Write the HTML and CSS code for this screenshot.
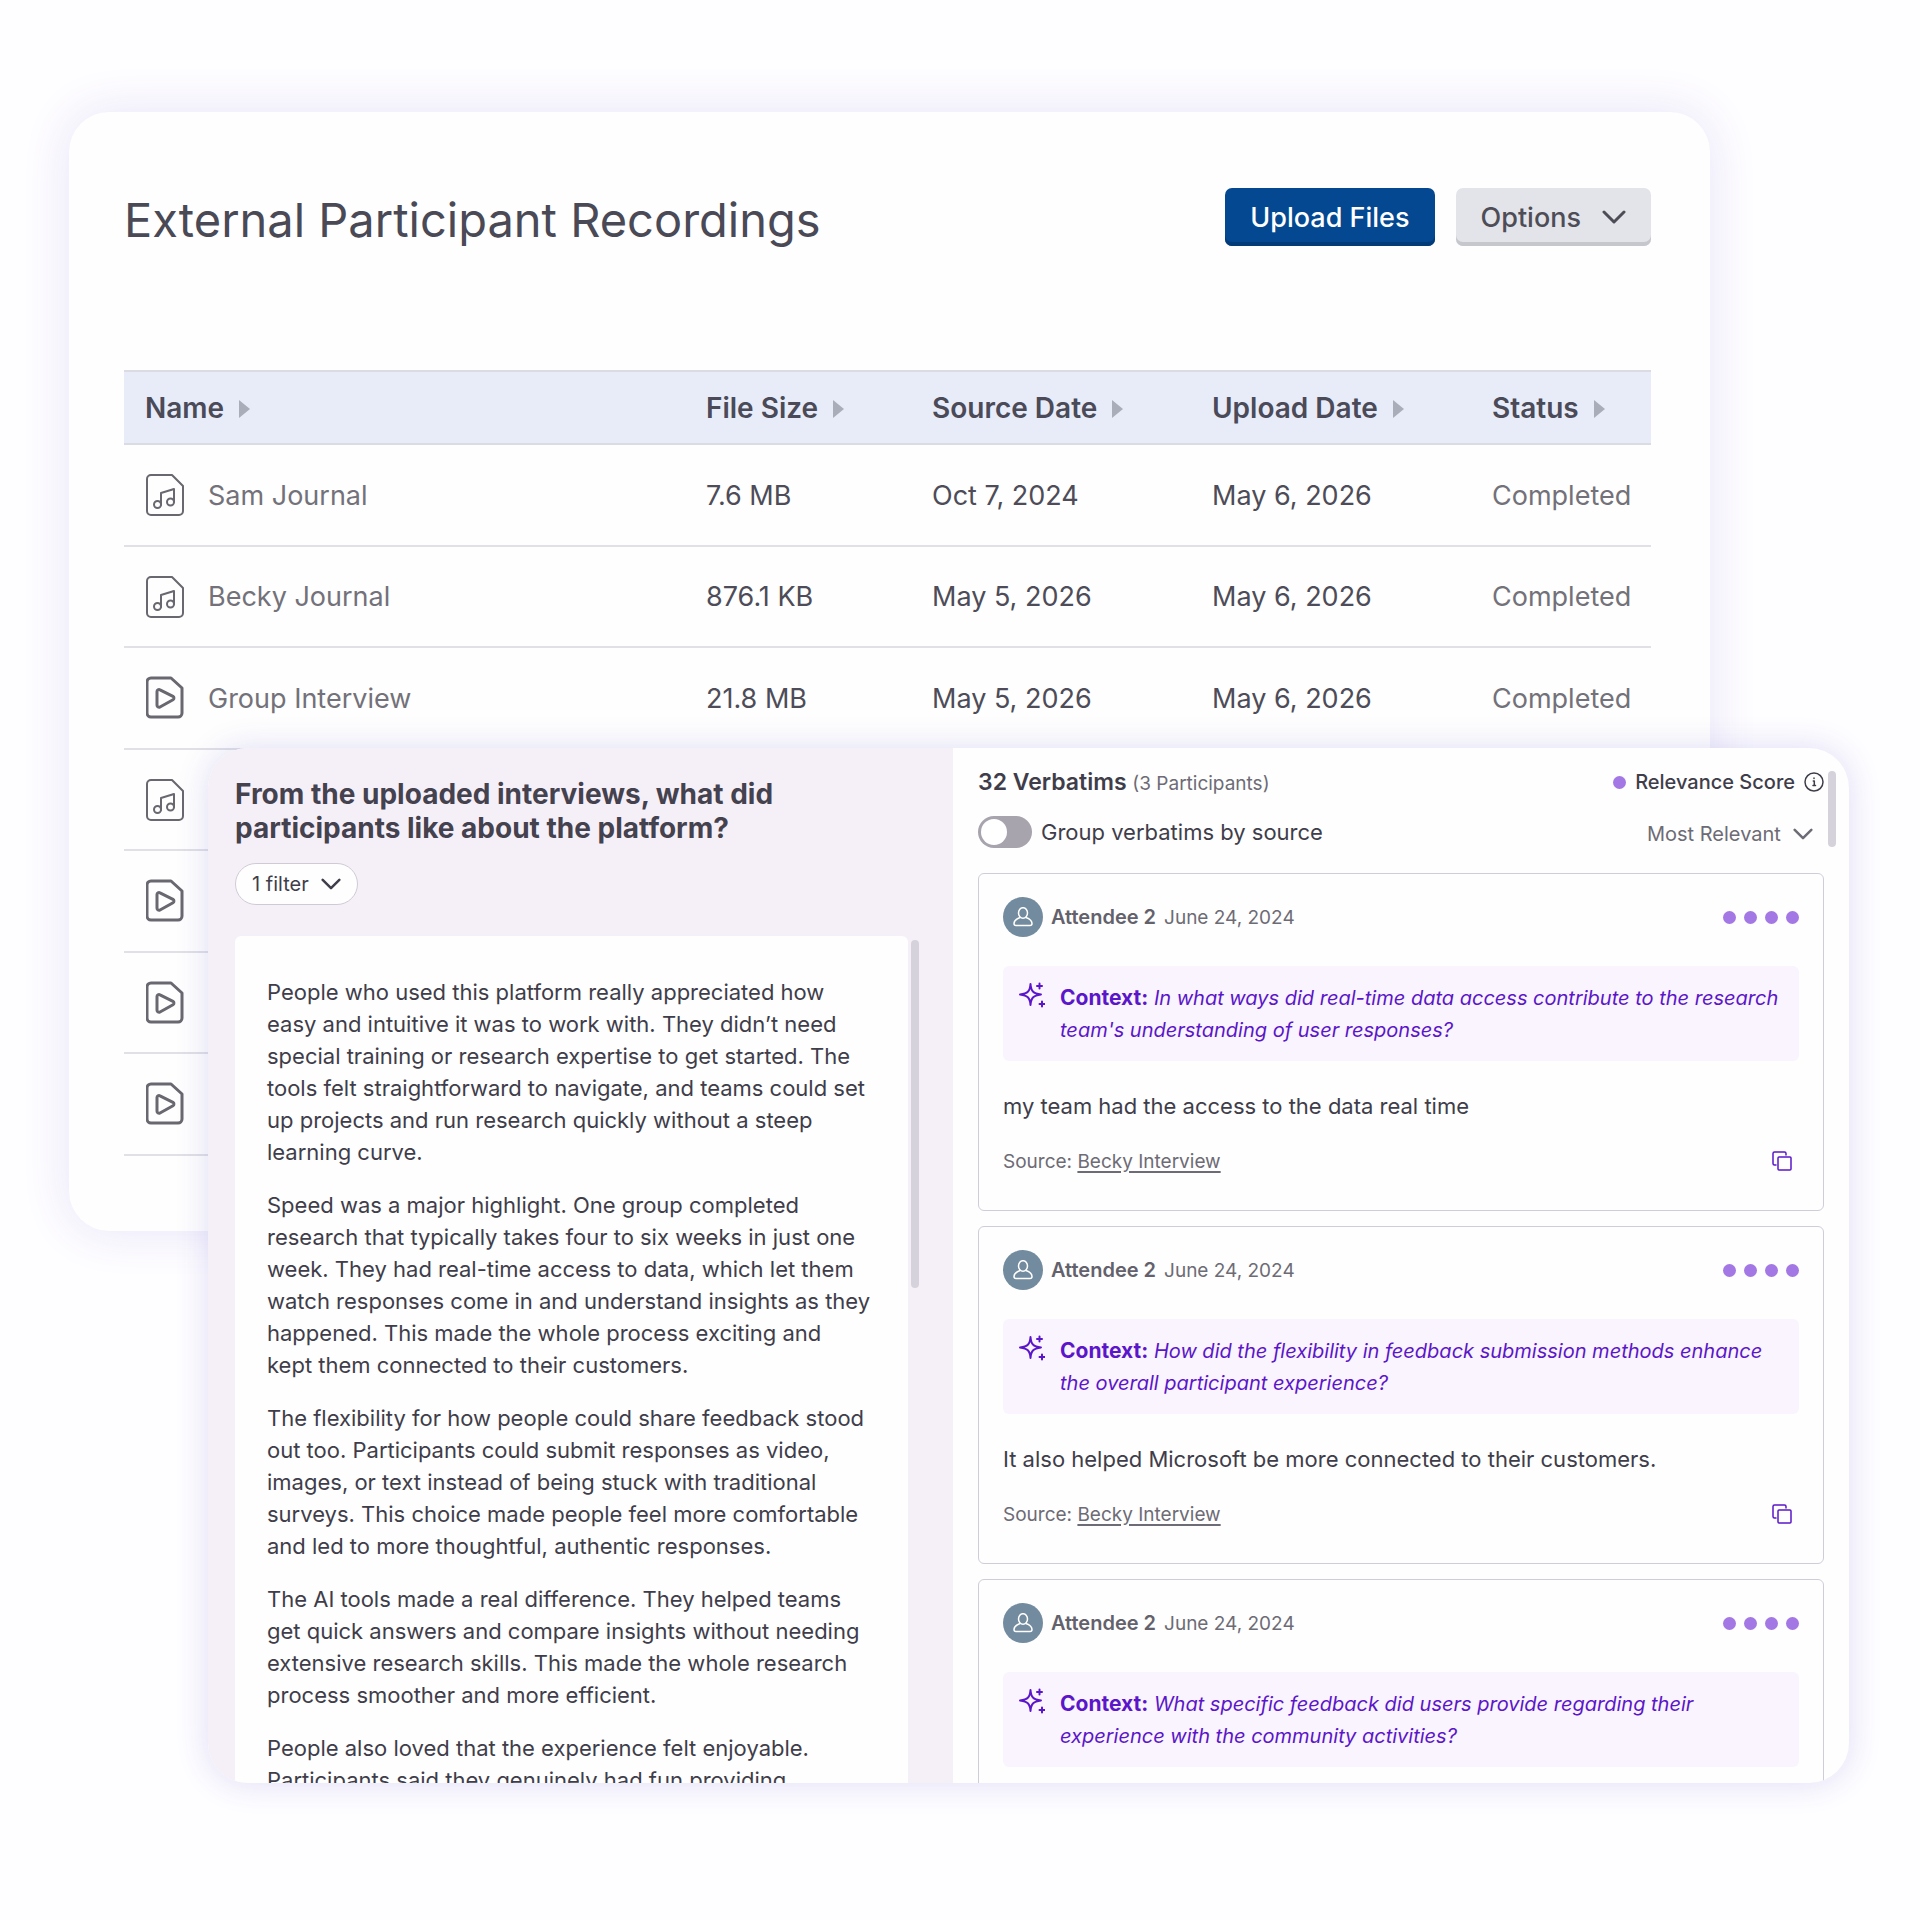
FILE: index.html
```html
<!DOCTYPE html>
<html lang="en">
<head>
    <meta charset="UTF-8">
    <meta name="viewport" content="width=device-width, initial-scale=1.0">
    <title>External Participant Recordings</title>
    <link rel="stylesheet" href="styles.css">
</head>
<body>

<!-- Shared icons -->
<svg class="sprite" aria-hidden="true">
    <symbol id="icon-audio" viewBox="0 0 40 44">
        <path d="M5 2H26L37 13V38a4 4 0 0 1-4 4H5a4 4 0 0 1-4-4V6a4 4 0 0 1 4-4z"/>
        <path d="M15 32V20L28 16V29"/>
        <circle cx="11.500" cy="31.500" r="3.500"/>
        <circle cx="24.500" cy="29" r="3.500"/>
    </symbol>
    <symbol id="icon-video" viewBox="0 0 40 44">
        <path d="M5 2H25L36 12V37a4 4 0 0 1-4 4H5a4 4 0 0 1-4-4V6a4 4 0 0 1 4-4z"/>
        <path d="M11 15.500a2 2 0 0 1 3-1.700L27 20.300a2 2 0 0 1 0 3.400L14 31a2 2 0 0 1-3-1.700z"/>
    </symbol>
    <symbol id="icon-chevron" viewBox="0 0 24 14">
        <path d="M2 2L12 12L22 2"/>
    </symbol>
    <symbol id="icon-info" viewBox="0 0 20 20">
        <circle cx="10" cy="10" r="9"/>
        <path d="M9.300 9H10.300V13.500M9 13.500H11.500M10 6V6.500"/>
    </symbol>
    <symbol id="icon-person" viewBox="0 0 20 20">
        <ellipse cx="10" cy="6" rx="4.500" ry="5.300"/>
        <path d="M7 10.500C3 12 1 14 1 16.500Q1 18.500 3 18.500H17Q19 18.500 19 16.500C19 14 17 12 13 10.500"/>
    </symbol>
    <symbol id="icon-sparkle" viewBox="0 0 26 26">
        <path d="M11.500 2C12 9 14 11.500 22 12.500C14 13.500 12 16 11.500 23C11 16 9 13.500 1 12.500C9 11.500 11 9 11.500 2z"/>
        <path d="M20.500 1.500V6.500M18 4H23M23 19.500V24.500M20.500 22H25.500"/>
    </symbol>
    <symbol id="icon-copy" viewBox="0 0 20 20">
        <path d="M4 14H2.500Q1 14 1 12.500V2.500Q1 1 2.500 1H12.500Q14 1 14 2.500V4"/>
        <rect x="6" y="6" width="13" height="13" rx="1"/>
    </symbol>
</svg>

<main class="page">
    <section class="card recordings">
        <header class="recordings-header">
            <h1>External Participant Recordings</h1>
            <div class="actions">
                <button type="button" class="btn btn-primary">Upload Files</button>
                <button type="button" class="btn btn-secondary">Options <svg class="chevron"><use href="#icon-chevron"/></svg></button>
            </div>
        </header>

        <table class="files">
            <colgroup>
                <col class="col-name">
                <col class="col-size">
                <col class="col-date">
                <col class="col-date">
                <col class="col-status">
            </colgroup>
            <thead>
                <tr>
                    <th><span class="sort">Name</span></th>
                    <th><span class="sort">File Size</span></th>
                    <th><span class="sort">Source Date</span></th>
                    <th><span class="sort">Upload Date</span></th>
                    <th><span class="sort">Status</span></th>
                </tr>
            </thead>
            <tbody>
                <tr>
                    <td><div class="file"><svg class="file-icon"><use href="#icon-audio"/></svg>Sam Journal</div></td>
                    <td>7.6 MB</td>
                    <td>Oct 7, 2024</td>
                    <td>May 6, 2026</td>
                    <td class="status">Completed</td>
                </tr>
                <tr>
                    <td><div class="file"><svg class="file-icon"><use href="#icon-audio"/></svg>Becky Journal</div></td>
                    <td>876.1 KB</td>
                    <td>May 5, 2026</td>
                    <td>May 6, 2026</td>
                    <td class="status">Completed</td>
                </tr>
                <tr>
                    <td><div class="file"><svg class="file-icon file-video"><use href="#icon-video"/></svg>Group Interview</div></td>
                    <td>21.8 MB</td>
                    <td>May 5, 2026</td>
                    <td>May 6, 2026</td>
                    <td class="status">Completed</td>
                </tr>
                <tr>
                    <td colspan="5"><div class="file"><svg class="file-icon"><use href="#icon-audio"/></svg></div></td>
                </tr>
                <tr>
                    <td colspan="5"><div class="file"><svg class="file-icon file-video"><use href="#icon-video"/></svg></div></td>
                </tr>
                <tr>
                    <td colspan="5"><div class="file"><svg class="file-icon file-video"><use href="#icon-video"/></svg></div></td>
                </tr>
                <tr>
                    <td colspan="5"><div class="file"><svg class="file-icon file-video"><use href="#icon-video"/></svg></div></td>
                </tr>
            </tbody>
        </table>
    </section>

    <section class="card insights">
        <div class="answer">
            <h2>From the uploaded interviews, what did participants like about the platform?</h2>
            <button type="button" class="filter">1 filter <svg class="chevron"><use href="#icon-chevron"/></svg></button>

            <div class="answer-body">
                <div class="answer-text">
                    <p>People who used this platform really appreciated how easy and intuitive it was to work with. They didn’t need special training or research expertise to get started. The tools felt straightforward to navigate, and teams could set up projects and run research quickly without a steep learning curve.</p>
                    <p>Speed was a major highlight. One group completed research that typically takes four to six weeks in just one week. They had real-time access to data, which let them watch responses come in and understand insights as they happened. This made the whole process exciting and kept&nbsp;them connected to their customers.</p>
                    <p>The flexibility for how people could share feedback stood out too. Participants could submit responses as video, images, or text instead of being stuck with traditional surveys. This choice made people feel more comfortable and led to more thoughtful, authentic responses.</p>
                    <p>The AI tools made a real difference. They helped teams get quick answers and compare insights without needing extensive research skills. This made the whole research process smoother and more efficient.</p>
                    <p>People also loved that the experience felt enjoyable. Participants said they genuinely had fun providing</p>
                </div>
                <div class="scroll-thumb"></div>
            </div>
        </div>

        <div class="verbatims">
            <div class="verbatims-bar">
                <h3>32 Verbatims <small>(3 Participants)</small></h3>
                <div class="score-label"><span class="dot"></span>Relevance Score <svg class="info"><use href="#icon-info"/></svg></div>
            </div>
            <div class="verbatims-bar controls">
                <div class="group-toggle">
                    <input type="checkbox" id="group" class="switch">
                    <label for="group">Group verbatims by source</label>
                </div>
                <div class="sort-by">
                    <select aria-label="Sort verbatims">
                        <option>Most Relevant</option>
                    </select>
                    <svg class="chevron"><use href="#icon-chevron"/></svg>
                </div>
            </div>

            <article class="verbatim">
                <div class="verbatim-head">
                    <span class="avatar"><svg><use href="#icon-person"/></svg></span>
                    <strong>Attendee 2</strong>
                    <span>June 24, 2024</span>
                    <div class="dots"><span class="dot"></span><span class="dot"></span><span class="dot"></span><span class="dot"></span></div>
                </div>
                <div class="context">
                    <svg class="sparkle"><use href="#icon-sparkle"/></svg>
                    <p><b>Context:</b> <em>In what ways did real-time data access contribute to the research team's understanding of user responses?</em></p>
                </div>
                <p class="quote">my team had the access to the data real time</p>
                <div class="verbatim-foot">
                    <span>Source: <a href="#">Becky Interview</a></span>
                    <button type="button" class="copy" aria-label="Copy"><svg><use href="#icon-copy"/></svg></button>
                </div>
            </article>

            <article class="verbatim">
                <div class="verbatim-head">
                    <span class="avatar"><svg><use href="#icon-person"/></svg></span>
                    <strong>Attendee 2</strong>
                    <span>June 24, 2024</span>
                    <div class="dots"><span class="dot"></span><span class="dot"></span><span class="dot"></span><span class="dot"></span></div>
                </div>
                <div class="context">
                    <svg class="sparkle"><use href="#icon-sparkle"/></svg>
                    <p><b>Context:</b> <em>How did the flexibility in feedback submission methods enhance the overall participant experience?</em></p>
                </div>
                <p class="quote">It also helped Microsoft be more connected to their customers.</p>
                <div class="verbatim-foot">
                    <span>Source: <a href="#">Becky Interview</a></span>
                    <button type="button" class="copy" aria-label="Copy"><svg><use href="#icon-copy"/></svg></button>
                </div>
            </article>

            <article class="verbatim">
                <div class="verbatim-head">
                    <span class="avatar"><svg><use href="#icon-person"/></svg></span>
                    <strong>Attendee 2</strong>
                    <span>June 24, 2024</span>
                    <div class="dots"><span class="dot"></span><span class="dot"></span><span class="dot"></span><span class="dot"></span></div>
                </div>
                <div class="context">
                    <svg class="sparkle"><use href="#icon-sparkle"/></svg>
                    <p><b>Context:</b> <em>What specific feedback did users provide regarding their experience with the community activities?</em></p>
                </div>
            </article>

            <div class="scroll-thumb"></div>
        </div>
    </section>
</main>

</body>
</html>
```
FILE: styles.css
```css
* {
    box-sizing: border-box;
}

body {
    margin: 0;
    background-color: #fefdff;
    color: #3f3d4a;
    font-family: Inter, "Liberation Sans", sans-serif;
    font-size: 20px;
}

h1, h2, h3, p {
    margin: 0;
}

button, select {
    font-family: inherit;
    color: inherit;
}

svg {
    display: block;
    flex: none;
    fill: none;
    stroke: currentColor;
    stroke-width: 2;
    stroke-linecap: round;
    stroke-linejoin: round;
}

.sprite {
    position: absolute;
    width: 0;
    height: 0;
}

.page {
    padding: 112px 71px 137px 69px;
}

.card {
    background-color: #fefefe;
    border-radius: 40px;
}

/* Recordings */
.recordings {
    margin-right: 139px;
    padding: 76px 59px 75px 55px;
    box-shadow: 0 0 48px rgba(90, 80, 200, 0.14);
}

.recordings-header {
    display: flex;
    justify-content: space-between;
    align-items: flex-start;
    height: 182px;
}

h1 {
    font-size: 47px;
    font-weight: 400;
    line-height: 64px;
    color: #4a4956;
}

.actions {
    display: flex;
    gap: 21px;
}

.btn {
    display: flex;
    align-items: center;
    justify-content: center;
    gap: 21px;
    height: 58px;
    padding: 0 25px;
    border: none;
    border-radius: 7px;
    font-size: 27px;
    font-weight: 500;
    cursor: pointer;
}

.btn-primary {
    background-color: #034891;
    color: white;
    box-shadow: inset 0 -4px #033a78;
}

.btn-secondary {
    background-color: #e3e4e9;
    color: #4e4d57;
    box-shadow: inset 0 -4px #c6c7cd;
}

.chevron {
    width: 24px;
    height: 14px;
}

.btn .chevron {
    stroke-width: 3;
}

.files {
    width: 100%;
    border-collapse: collapse;
    table-layout: fixed;
    font-size: 27px;
}

.col-size {
    width: 226px;
}

.col-date {
    width: 280px;
}

.col-status {
    width: 180px;
}

.files th {
    height: 73px;
    padding: 0 0 0 21px;
    background-color: #e8ecf9;
    border-top: 2px solid #dadbe3;
    border-bottom: 2px solid #dadbe3;
    text-align: left;
    font-size: 28px;
    font-weight: 600;
    color: #4a4a58;
}

.files td {
    height: 101px;
    padding: 0 0 0 21px;
    border-bottom: 2px solid #e0e0e6;
    color: #4d4c58;
}

.files tbody tr:nth-child(odd) td {
    height: 102px;
}

.files .status, .file {
    color: #737179;
}

.sort::after {
    content: "";
    display: inline-block;
    margin-left: 15px;
    border-left: 11px solid #a9adba;
    border-top: 9px solid transparent;
    border-bottom: 9px solid transparent;
}

.file {
    display: flex;
    align-items: center;
    gap: 22px;
    padding-left: 1px;
}

.file-icon {
    width: 40px;
    height: 44px;
    stroke: #69676f;
}

.file-video {
    stroke-width: 3;
}

/* Insights */
.insights {
    position: relative;
    display: flex;
    height: 1035px;
    margin: -483px 0 0 139px;
    overflow: hidden;
    box-shadow: 0 0 32px rgba(80, 70, 200, 0.18);
}

.answer {
    width: 745px;
    flex: none;
    padding: 29px 34px 0 27px;
    background-color: #f5f0f7;
}

h2 {
    font-size: 28px;
    font-weight: 700;
    line-height: 34px;
    color: #45424f;
}

.filter {
    display: flex;
    align-items: center;
    gap: 12px;
    height: 42px;
    margin: 18px 0 31px;
    padding: 0 16px;
    border: 1px solid #d0cad6;
    border-radius: 21px;
    background-color: #fefefe;
    font-size: 20px;
    cursor: pointer;
}

.filter .chevron, .sort-by .chevron {
    width: 20px;
    height: 12px;
    stroke-width: 3;
}

.answer-body {
    display: flex;
    gap: 3px;
}

.answer-text {
    flex: 1;
    padding: 40px 34px 0 32px;
    border-radius: 6px;
    background-color: #fefefe;
    line-height: 32px;
    font-size: 22px;
}

.answer-text p {
    margin-bottom: 21px;
}

.scroll-thumb {
    width: 8px;
    height: 348px;
    margin-top: 4px;
    border-radius: 4px;
    background-color: #d6d2db;
}

.verbatims {
    position: relative;
    flex: 1;
    padding: 20px 25px 0;
}

.verbatims .scroll-thumb {
    position: absolute;
    top: 23px;
    right: 13px;
    height: 76px;
    margin: 0;
}

.verbatims-bar {
    display: flex;
    justify-content: space-between;
    align-items: center;
    height: 28px;
}

.controls {
    height: 32px;
    margin: 20px 0 25px;
}

h3 {
    font-size: 23px;
    font-weight: 600;
}

h3 small {
    font-size: 19px;
    font-weight: 400;
    color: #6d6b75;
}

.score-label {
    display: flex;
    align-items: center;
    gap: 9px;
    font-weight: 500;
}

.info {
    width: 20px;
    height: 20px;
    stroke-width: 1.5;
}

.dot {
    width: 13px;
    height: 13px;
    border-radius: 50%;
    background-color: #a478e4;
}

.group-toggle {
    display: flex;
    align-items: center;
    gap: 9px;
    font-size: 22px;
}

.switch {
    appearance: none;
    width: 54px;
    height: 32px;
    margin: 0;
    border-radius: 16px;
    background-color: #a8a4ae;
    cursor: pointer;
}

.switch::before {
    content: "";
    display: block;
    width: 26px;
    height: 26px;
    margin: 3px;
    border-radius: 50%;
    background-color: white;
}

.sort-by {
    display: flex;
    align-items: center;
    gap: 12px;
    padding: 4px 11px 0 0;
    color: #6d6b75;
}

.sort-by select {
    appearance: none;
    padding: 0;
    border: none;
    background: none;
    font-size: 20px;
}

.verbatim {
    height: 338px;
    margin-bottom: 15px;
    padding: 23px 24px 0;
    border: 1px solid #cfcdd9;
    border-radius: 6px;
}

.verbatim-head {
    display: flex;
    align-items: center;
    gap: 8px;
    font-size: 19px;
    color: #6d6b75;
}

.verbatim-head strong {
    font-size: 20px;
    font-weight: 600;
    color: #63616c;
}

.avatar {
    display: flex;
    align-items: center;
    justify-content: center;
    width: 40px;
    height: 40px;
    border-radius: 50%;
    background-color: #738b9f;
    color: white;
}

.avatar svg {
    width: 20px;
    height: 20px;
    stroke-width: 1.5;
}

.dots {
    display: flex;
    gap: 8px;
    margin-left: auto;
}

.context {
    display: flex;
    gap: 15px;
    height: 95px;
    margin-top: 29px;
    padding: 16px;
    border-radius: 6px;
    background-color: #f9f4fe;
    color: #5b16c9;
    line-height: 32px;
}

.context b {
    font-size: 21px;
    font-weight: 700;
}

.sparkle {
    width: 26px;
    height: 26px;
}

.quote {
    margin-top: 29px;
    line-height: 32px;
    font-size: 22px;
}

.verbatim-foot {
    display: flex;
    justify-content: space-between;
    align-items: center;
    height: 32px;
    margin-top: 23px;
    padding-right: 7px;
    font-size: 19px;
    color: #6d6b75;
}

.verbatim-foot a {
    color: inherit;
    text-decoration-thickness: 2px;
    text-underline-offset: 3px;
}

.copy {
    padding: 0;
    border: none;
    background: none;
    color: #5b16c9;
    cursor: pointer;
}

.copy svg {
    width: 20px;
    height: 20px;
    stroke-width: 1.5;
}
```
